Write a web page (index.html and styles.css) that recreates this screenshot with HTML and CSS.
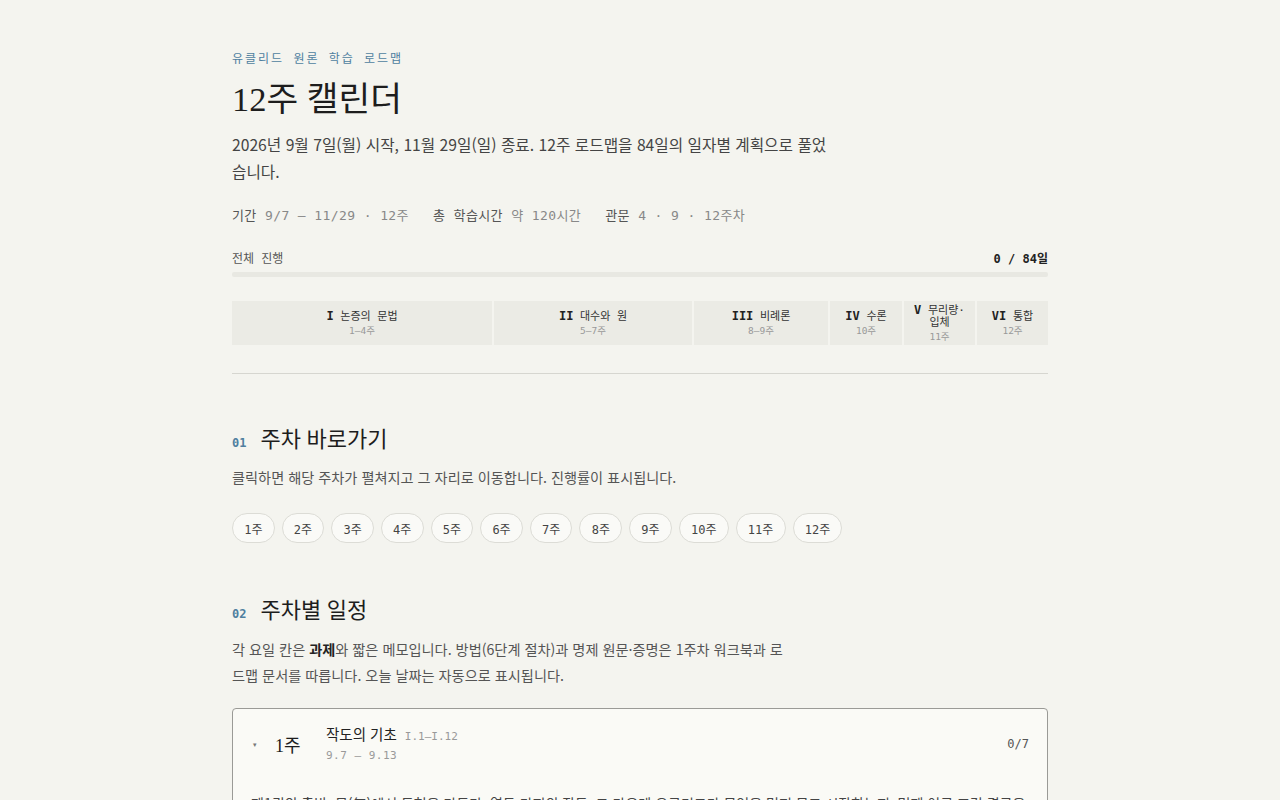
FILE: index.html
```html
<!DOCTYPE html>
<html lang="ko">
<head>
<meta charset="utf-8">
<title>12주 캘린더</title>
<link rel="stylesheet" href="styles.css">
</head>
<body>
<main class="page">
  <header class="hero">
    <div class="crumb">유클리드 원론 학습 로드맵</div>
    <h1 class="title">12주 캘린더</h1>
    <p class="lead">2026년 9월 7일(월) 시작, 11월 29일(일) 종료. 12주 로드맵을 84일의 일자별 계획으로 풀었습니다.</p>
    <div class="meta">
      <span class="meta-item"><span class="meta-key">기간</span> 9/7 – 11/29 · 12주</span>
      <span class="meta-item"><span class="meta-key">총 학습시간</span> 약 120시간</span>
      <span class="meta-item"><span class="meta-key">관문</span> 4 · 9 · 12주차</span>
    </div>
    <div class="progress-head">
      <span>전체 진행</span>
      <span class="progress-count">0 / 84일</span>
    </div>
    <div class="progress-bar"><div class="progress-fill" style="width:0%"></div></div>
    <div class="parts">
      <div class="part"><div class="part-name"><b>I</b> 논증의 문법</div><div class="part-weeks">1–4주</div></div>
      <div class="part"><div class="part-name"><b>II</b> 대수와 원</div><div class="part-weeks">5–7주</div></div>
      <div class="part"><div class="part-name"><b>III</b> 비례론</div><div class="part-weeks">8–9주</div></div>
      <div class="part"><div class="part-name"><b>IV</b> 수론</div><div class="part-weeks">10주</div></div>
      <div class="part"><div class="part-name"><b>V</b> 무리량·<br>입체</div><div class="part-weeks">11주</div></div>
      <div class="part"><div class="part-name"><b>VI</b> 통합</div><div class="part-weeks">12주</div></div>
    </div>
  </header>

  <section class="section first">
    <h2 class="sec-title"><span class="sec-num">01</span>주차 바로가기</h2>
    <p class="sec-desc">클릭하면 해당 주차가 펼쳐지고 그 자리로 이동합니다. 진행률이 표시됩니다.</p>
    <div class="chips">
      <span class="chip">1주</span><span class="chip">2주</span><span class="chip">3주</span><span class="chip">4주</span><span class="chip">5주</span><span class="chip">6주</span><span class="chip">7주</span><span class="chip">8주</span><span class="chip">9주</span><span class="chip">10주</span><span class="chip">11주</span><span class="chip">12주</span>
    </div>
  </section>

  <section class="section">
    <h2 class="sec-title"><span class="sec-num">02</span>주차별 일정</h2>
    <p class="sec-desc narrow">각 요일 칸은 <b>과제</b>와 짧은 메모입니다. 방법(6단계 절차)과 명제 원문·증명은 1주차 워크북과 로드맵 문서를 따릅니다. 오늘 날짜는 자동으로 표시됩니다.</p>
    <div class="week-card">
      <div class="week-head">
        <span class="chev">▾</span>
        <span class="week-no">1주</span>
        <div class="week-info">
          <div class="week-title">작도의 기초 <span class="week-range">I.1–I.12</span></div>
          <div class="week-date">9.7 – 9.13</div>
        </div>
        <span class="week-count">0/7</span>
      </div>
      <p class="week-body">제1권의 출발. 무(無)에서 도형을 만든다. 열두 가지의 작도, 그 가운데 유클리드가 무엇을 먼저 묻고 시작하는지, 명제 이름·조건·결론을 구분해 가며 읽고서 정리한다.</p>
    </div>
  </section>
</main>
</body>
</html>
```

FILE: styles.css
```css
* { box-sizing: border-box; }
html, body { margin: 0; padding: 0; }
body {
  background: #f4f4ef;
  color: #222;
  font-family: "Noto Sans CJK KR", "Noto Sans", sans-serif;
}
.page {
  width: 816px;
  margin: 0 auto;
  padding-top: 51px;
}
.crumb {
  font-family: "DejaVu Sans Mono", "Noto Sans CJK KR", monospace;
  font-size: 12px;
  line-height: 16px;
  letter-spacing: 2px;
  color: #4f7f9f;
}
.title {
  margin: 10px 0 0;
  font-family: "Liberation Serif", "Noto Sans CJK KR", serif;
  font-weight: 400;
  font-size: 34.5px;
  line-height: 44px;
  color: #1d1d1d;
}
.lead {
  margin: 10px 0 0;
  max-width: 600px;
  font-size: 15.7px;
  line-height: 27px;
  color: #444;
}
.meta {
  margin-top: 21px;
  display: flex;
  gap: 24px;
  font-family: "DejaVu Sans Mono", "Noto Sans CJK KR", monospace;
  font-size: 13px;
  line-height: 20px;
  letter-spacing: 0.4px;
  color: #888;
}
.meta-key {
  color: #555;
}
.progress-head {
  margin-top: 25px;
  display: flex;
  justify-content: space-between;
  font-family: "DejaVu Sans Mono", "Noto Sans CJK KR", monospace;
  font-size: 12px;
  line-height: 16px;
  color: #555;
}
.progress-count { color: #222; font-weight: 600; }
.progress-bar {
  margin-top: 5px;
  height: 5px;
  background: #e8e8e2;
  border-radius: 2px;
}
.progress-fill { height: 100%; background: #4f7f9f; }
.parts {
  margin-top: 24px;
  display: grid;
  grid-template-columns: 260fr 198fr 134fr 72fr 71fr 71fr;
  gap: 2px;
}
.part {
  background: #ebebe5;
  height: 44px;
  display: flex;
  flex-direction: column;
  align-items: center;
  justify-content: center;
  text-align: center;
}
.part-name {
  font-family: "DejaVu Sans Mono", "Noto Sans CJK KR", monospace;
  font-size: 11px;
  line-height: 12px;
  color: #333;
}
.part-name b {
  font-size: 12px;
  font-weight: 700;
  color: #222;
}
.part-weeks {
  margin-top: 2px;
  font-family: "DejaVu Sans Mono", "Noto Sans CJK KR", monospace;
  font-size: 9.5px;
  line-height: 12px;
  color: #999;
}
.section { margin-top: 53px; }
.section.first {
  border-top: 1px solid #d6d6d0;
  margin-top: 28px;
  padding-top: 51px;
}
.sec-title {
  margin: 0;
  display: flex;
  align-items: baseline;
  font-family: "Liberation Serif", "Noto Sans CJK KR", serif;
  font-weight: 400;
  font-size: 22px;
  line-height: 30px;
  color: #1d1d1d;
}
.sec-num {
  font-family: "DejaVu Sans Mono", monospace;
  font-size: 12px;
  color: #4f7f9f;
  margin-right: 14px;
  font-weight: 600;
}
.sec-desc {
  margin: 7px 0 0;
  font-size: 14.2px;
  line-height: 24px;
  color: #555;
}
.sec-desc.narrow {
  max-width: 560px;
  line-height: 26px;
  margin-top: 7px;
}
.sec-desc b { color: #222; font-weight: 700; }
.chips {
  margin-top: 24px;
  display: flex;
  gap: 7px;
}
.chip {
  height: 30px;
  padding: 0 11.2px;
  display: inline-flex;
  align-items: center;
  border: 1px solid #dcdcd6;
  border-radius: 15px;
  background: #fafaf7;
  font-family: "DejaVu Sans Mono", "Noto Sans CJK KR", monospace;
  font-size: 12px;
  color: #444;
}
.week-card {
  margin-top: 20px;
  background: #fafaf6;
  border: 1px solid #9a9a96;
  border-radius: 4px;
  height: 200px;
  padding: 0 18px;
}
.week-head {
  display: flex;
  align-items: center;
  padding-top: 11px;
  height: 59px;
}
.chev {
  font-size: 7px;
  color: #777;
  width: 24px;
  padding-left: 2px;
}
.week-no {
  font-family: "Liberation Serif", "Noto Sans CJK KR", serif;
  font-size: 18px;
  width: 51px;
  color: #1d1d1d;
}
.week-info { flex: 1; }
.week-title {
  font-size: 14.5px;
  line-height: 20px;
  color: #222;
}
.week-range {
  font-family: "DejaVu Sans Mono", monospace;
  font-size: 11px;
  color: #999;
  margin-left: 4px;
}
.week-date {
  margin-top: 1px;
  font-family: "DejaVu Sans Mono", monospace;
  font-size: 11px;
  line-height: 16px;
  letter-spacing: 0.5px;
  color: #999;
}
.week-count {
  font-family: "DejaVu Sans Mono", monospace;
  font-size: 12px;
  color: #555;
}
.week-body {
  margin: 23px 0 0;
  font-size: 14px;
  line-height: 24px;
  color: #444;
}
```
